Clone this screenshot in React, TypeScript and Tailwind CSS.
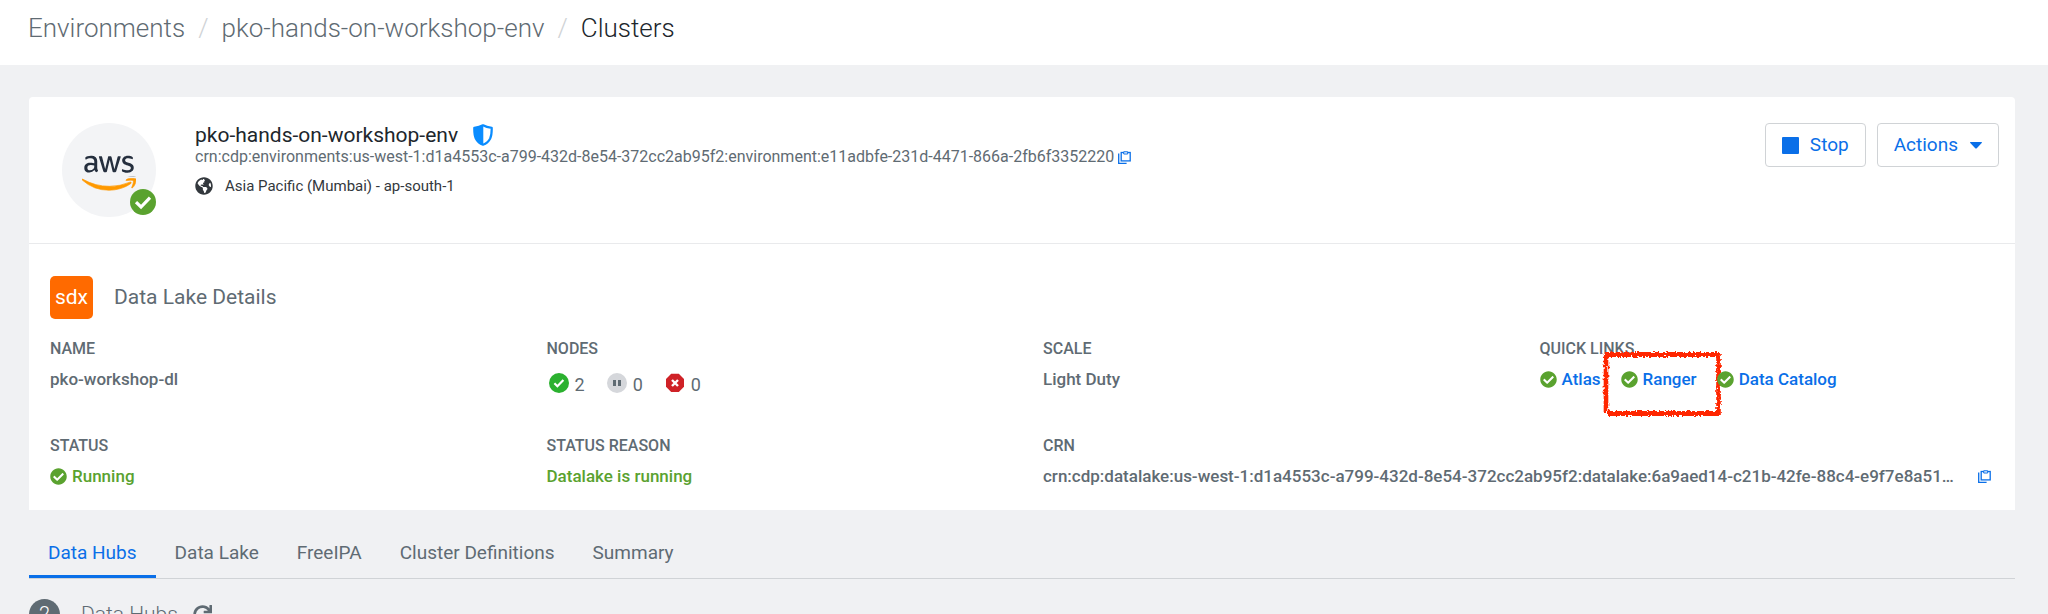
import type { ReactNode } from "react";
import { FaAws, FaCheckCircle, FaGlobeAmericas, FaRedo } from "react-icons/fa";

function CopyIcon() {
  return (
    <svg viewBox="0 0 13 13" className="size-[13px]" fill="none" stroke="currentColor" strokeWidth="1.3">
      <path d="M0.7 2.6V12.3H8.6" />
      <rect x="3.2" y="1.5" width="9" height="8.4" />
      <path d="M5.7 0.800h4v2.200h-4z" fill="white" strokeWidth="1" />
    </svg>
  );
}

function CopyButton({ label }: { label: string }) {
  return (
    <button type="button" aria-label={label} className="shrink-0 text-[#0a6fe8]">
      <CopyIcon />
    </button>
  );
}

function ShieldIcon() {
  return (
    <svg viewBox="0 0 20 22" className="h-[22px] w-5">
      <path
        d="M10 1.300C7.800 2.700 5 3.600 1.300 3.800 1.200 8 1.400 11.500 2.800 14.500 4.300 17.500 6.800 19.700 10 20.700c3.200-1 5.700-3.200 7.200-6.200 1.400-3 1.600-6.500 1.500-10.700C15 3.600 12.200 2.700 10 1.300z"
        fill="white"
        stroke="#0a8cff"
        strokeWidth="2.200"
        strokeLinejoin="round"
      />
      <path d="M10.300 1.300C7.800 2.700 5 3.600 1.300 3.800 1.200 8 1.400 11.500 2.800 14.500 4.300 17.500 6.800 19.700 10.300 20.700z" fill="#0a8cff" />
    </svg>
  );
}

function RunningNodeIcon() {
  return (
    <svg viewBox="0 0 20 20" className="size-5">
      <circle cx="10" cy="10" r="10" fill="#2bb12f" />
      <path d="M5.400 10.300l3 2.900 6-6.200" fill="none" stroke="white" strokeWidth="2.200" />
    </svg>
  );
}

function PausedNodeIcon() {
  return (
    <svg viewBox="0 0 20 20" className="size-5">
      <circle cx="10" cy="10" r="10" fill="#d5d7db" />
      <path d="M6 7h3v6H6zM11 7h3v6h-3z" fill="#5f6b73" />
    </svg>
  );
}

function FailedNodeIcon() {
  return (
    <svg viewBox="0 0 20 20" className="size-5">
      <path d="M6.200 0.800h7.600L19 6v7.800L13.800 19H6.200L1 13.800V6z" fill="#cf2227" />
      <path d="M7 7l6 6M13 7l-6 6" stroke="white" strokeWidth="2.400" />
    </svg>
  );
}

function Highlight() {
  return (
    <svg
      viewBox="0 0 120 68"
      className="pointer-events-none absolute -top-[19px] -left-[19px] h-[68px] w-[120px]"
      fill="none"
      stroke="#ff2600"
      aria-hidden="true"
    >
      <filter id="chalk" x="-5%" y="-10%" width="110%" height="120%">
        <feTurbulence type="fractalNoise" baseFrequency="0.45" numOctaves="2" seed="4" />
        <feDisplacementMap in="SourceGraphic" scale="5" xChannelSelector="R" yChannelSelector="G" />
      </filter>
      <g filter="url(#chalk)">
        <path d="M3 4.500H117M5 63.500H117" strokeWidth="5" />
        <path d="M4 4V62M116.500 3V65" strokeWidth="4.600" />
      </g>
    </svg>
  );
}

function Field({ label, wide, children }: { label: string; wide?: boolean; children: ReactNode }) {
  return (
    <div className={wide ? "col-span-2 min-w-0 pr-6 pl-[21px]" : "min-w-0 px-[21px]"}>
      <dt className="text-[16px] leading-5">{label}</dt>
      <dd className="mt-[10px] flex h-5 items-center text-[17px] leading-5">{children}</dd>
    </div>
  );
}

function QuickLink({ name, highlighted }: { name: string; highlighted?: boolean }) {
  return (
    <a href="#" className="relative flex items-center gap-[5px] text-[#0a6fe8]">
      <FaCheckCircle className="size-[17px] text-[#5aa22f]" />
      {name}
      {highlighted && <Highlight />}
    </a>
  );
}

function NodeCount({ icon, count }: { icon: ReactNode; count: number }) {
  return (
    <span className="flex items-center gap-1.5">
      {icon}
      <span className="pt-1 text-[18px] font-normal">{count}</span>
    </span>
  );
}

const tabs = ["Data Hubs", "Data Lake", "FreeIPA", "Cluster Definitions", "Summary"];

export default function App() {
  return (
    <div className="h-screen overflow-hidden bg-[#f0f1f3] font-[Roboto,sans-serif] text-[#5f6b73]">
      <header className="bg-white pt-3 pb-[21px] pl-7">
        <nav aria-label="Breadcrumb" className="flex gap-[13px] text-[26px] leading-8 font-light">
          <a href="#">Environments</a>
          <span className="text-[#d0d3d6]">/</span>
          <a href="#">pko-hands-on-workshop-env</a>
          <span className="text-[#d0d3d6]">/</span>
          <span className="text-[#20262c]">Clusters</span>
        </nav>
      </header>

      <main className="pt-8 pr-[33px] pl-[29px]">
        <section className="rounded-t-sm bg-white">
          <div className="flex items-start border-b border-[#e9eaec] pt-[26px] pr-4 pb-[26px] pl-[33px]">
            <div className="relative size-[94px] shrink-0 rounded-full bg-[#f3f4f6]">
              <FaAws className="absolute top-[22px] left-5 size-[54px] text-[#252f3e] [clip-path:inset(0_0_42%_0)]" />
              <FaAws
                stroke="currentColor"
                strokeWidth="8"
                className="absolute top-6 left-5 size-[54px] text-[#ff9900] [clip-path:inset(58%_0_0_0)]"
              />
              <svg viewBox="0 0 26 26" className="absolute right-0 bottom-[2px] size-[26px]">
                <circle cx="13" cy="13" r="13" fill="#5aa22f" />
                <path d="M6 13.200l5 4.800 9-9.400" fill="none" stroke="white" strokeWidth="3.200" />
              </svg>
            </div>
            <div className="ml-[39px] min-w-0 flex-1">
              <div className="flex items-center gap-[15px]">
                <h1 className="text-[21px] leading-6 text-[#20262c]">pko-hands-on-workshop-env</h1>
                <ShieldIcon />
              </div>
              <div className="flex items-center gap-1 text-[16px] leading-5">
                <span className="truncate">
                  crn:cdp:environments:us-west-1:d1a4553c-a799-432d-8e54-372cc2ab95f2:environment:e11adbfe-231d-4471-866a-2fb6f3352220
                </span>
                <CopyButton label="Copy environment CRN" />
              </div>
              <div className="mt-[9px] flex items-center gap-3 text-[15px] leading-5 text-[#33383d]">
                <FaGlobeAmericas className="size-[18px]" />
                Asia Pacific (Mumbai) - ap-south-1
              </div>
            </div>
            <div className="flex gap-[11px] text-[19px] text-[#0a6fe8]">
              <button type="button" className="flex h-11 items-center gap-[11px] rounded-sm border border-[#d0d3d6] px-4">
                <span className="size-[17px] rounded-[1px] bg-[#0a6fe8]" />
                Stop
              </button>
              <button type="button" className="flex h-11 items-center gap-3 rounded-sm border border-[#d0d3d6] px-4">
                Actions
                <svg viewBox="0 0 12 7" className="h-[7px] w-3" fill="currentColor">
                  <path d="M0.500 0h11q.8.3.2 1L7 6q-1 1-2 0L.3 1q-.6-.7.2-1z" />
                </svg>
              </button>
            </div>
          </div>

          <div className="pt-8 pb-6">
            <div className="flex items-center gap-[21px] pl-[21px]">
              <span className="flex size-[43px] items-center justify-center rounded-[5px] bg-[#ff6a00] text-[21px] text-white">
                sdx
              </span>
              <h2 className="text-[21px]">Data Lake Details</h2>
            </div>
            <dl className="mt-5 grid grid-cols-4 gap-y-[47px] font-medium">
              <Field label="NAME">pko-workshop-dl</Field>
              <Field label="NODES">
                <span className="flex gap-[22px] pt-2 pl-0.5">
                  <NodeCount icon={<RunningNodeIcon />} count={2} />
                  <NodeCount icon={<PausedNodeIcon />} count={0} />
                  <NodeCount icon={<FailedNodeIcon />} count={0} />
                </span>
              </Field>
              <Field label="SCALE">Light Duty</Field>
              <Field label="QUICK LINKS">
                <span className="flex gap-5">
                  <QuickLink name="Atlas" />
                  <QuickLink name="Ranger" highlighted />
                  <QuickLink name="Data Catalog" />
                </span>
              </Field>
              <Field label="STATUS">
                <span className="flex items-center gap-[5px] text-[#5aa22f]">
                  <FaCheckCircle className="size-[17px]" />
                  Running
                </span>
              </Field>
              <Field label="STATUS REASON">
                <span className="text-[#5aa22f]">Datalake is running</span>
              </Field>
              <Field label="CRN" wide>
                <span className="min-w-0 flex-1 truncate">
                  crn:cdp:datalake:us-west-1:d1a4553c-a799-432d-8e54-372cc2ab95f2:datalake:6a9aed14-c21b-42fe-88c4-e9f7e8a51…
                </span>
                <CopyButton label="Copy data lake CRN" />
              </Field>
            </dl>
          </div>
        </section>

        <div role="tablist" className="mt-[23px] flex border-b border-[#d0d3d6] text-[19px]">
          {tabs.map((tab, i) => (
            <button
              key={tab}
              type="button"
              role="tab"
              aria-selected={i === 0}
              className={
                i === 0
                  ? "h-[45px] border-b-[3px] border-[#0a6fe8] px-[19px] pb-0.5 text-[#0a6fe8]"
                  : "h-[45px] border-b-[3px] border-transparent px-[19px] pb-0.5"
              }
            >
              {tab}
            </button>
          ))}
        </div>

        <div className="mt-5 flex items-center leading-[31px]">
          <span className="flex size-[31px] shrink-0 items-center justify-center rounded-full bg-[#5f6b73] text-[20px] font-light text-white">
            2
          </span>
          <h2 className="ml-[21px] text-[21px] font-light">Data Hubs</h2>
          <button type="button" aria-label="Refresh data hubs" className="ml-[15px]">
            <FaRedo className="size-[19px]" />
          </button>
        </div>
      </main>
    </div>
  );
}
